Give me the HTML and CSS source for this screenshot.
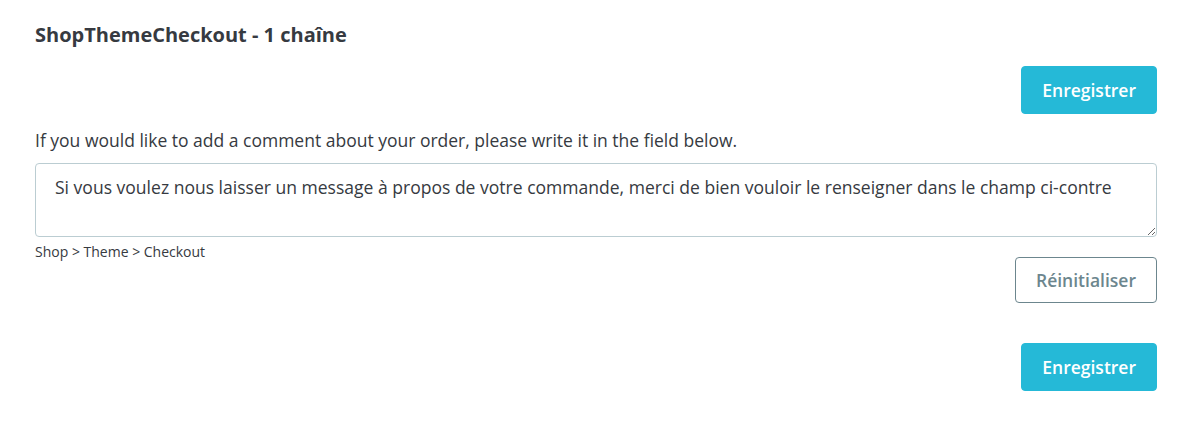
FILE: index.html
```html
<!DOCTYPE html>
<html lang="fr">
<head>
<meta charset="utf-8">
<title>ShopThemeCheckout</title>
<link rel="stylesheet" href="styles.css">
</head>
<body>
<div class="page">
  <h2 class="title">ShopThemeCheckout - 1 chaîne</h2>
  <div class="actions actions-top">
    <button class="btn btn-primary" type="button">Enregistrer</button>
  </div>
  <div class="item">
    <p class="source">If you would like to add a comment about your order, please write it in the field below.</p>
    <textarea class="field">Si vous voulez nous laisser un message à propos de votre commande, merci de bien vouloir le renseigner dans le champ ci-contre</textarea>
    <div class="meta-row">
      <div class="crumb">Shop &gt; Theme &gt; Checkout</div>
      <button class="btn btn-outline" type="button">Réinitialiser</button>
    </div>
  </div>
  <div class="actions actions-bottom">
    <button class="btn btn-primary" type="button">Enregistrer</button>
  </div>
</div>
</body>
</html>
```
FILE: styles.css
```css
* { box-sizing: border-box; }
html, body { margin: 0; padding: 0; background: #fff; }
body {
  font-family: "Open Sans", "Noto Sans", sans-serif;
  color: #363a41;
}
.page {
  padding: 21px 30px 0 35px;
}
.title {
  margin: 0;
  font-size: 20px;
  font-weight: 700;
  line-height: 28px;
  color: #363a41;
}
.actions {
  display: flex;
  justify-content: flex-end;
}
.actions-top { margin-top: 17px; }
.btn {
  font-family: "Open Sans", "Noto Sans", sans-serif;
  font-size: 17.5px;
  font-weight: 600;
  border-radius: 4px;
  padding: 0 20px;
  height: 48px;
  cursor: pointer;
}
.btn-primary {
  background: #25b9d7;
  border: 1px solid #25b9d7;
  color: #fff;
}
.btn-outline {
  background: #fff;
  border: 1px solid #6c868e;
  color: #6c868e;
  height: 46px;
  margin-top: 20px;
}
.item { margin-top: 13px; }
.source {
  margin: 0;
  font-size: 17.5px;
  line-height: 26px;
}
.field {
  display: block;
  width: 100%;
  height: 74px;
  margin-top: 10px;
  padding: 11px 19px;
  border: 1px solid #bbcdd2;
  border-radius: 4px;
  font-family: "Open Sans", "Noto Sans", sans-serif;
  font-size: 17.55px;
  line-height: 24px;
  color: #363a41;
  resize: vertical;
}
.meta-row {
  display: flex;
  justify-content: space-between;
  align-items: flex-start;
}
.crumb {
  padding-top: 7px;
  font-size: 14px;
  line-height: 16px;
}
.actions-bottom { margin-top: 40px; }
```
